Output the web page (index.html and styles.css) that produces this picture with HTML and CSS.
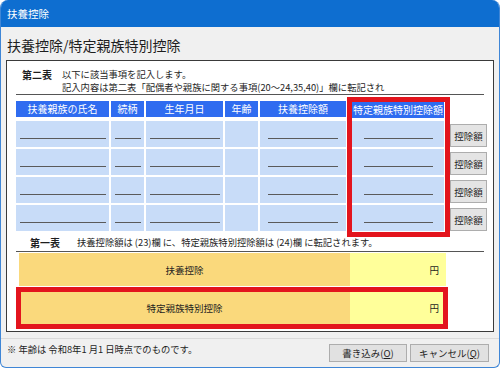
FILE: index.html
```html
<!DOCTYPE html>
<html>
<head>
    <title>扶養控除</title>
    <link rel="stylesheet" href="styles.css">
</head>
<body>
    <div class="window">
        <div class="titlebar">扶養控除</div>
        <h1 class="heading">扶養控除/特定親族特別控除</h1>

        <div class="panel">
            <div class="note">
                <div class="note-label">第二表</div>
                <div class="note-text">以下に該当事項を記入します。<br>記入内容は第二表「配偶者や親族に関する事項(20～24,35,40)」欄に転記され</div>
            </div>

            <div class="grid">
                <div class="head">扶養親族の氏名</div>
                <div class="head">続柄</div>
                <div class="head">生年月日</div>
                <div class="head">年齢</div>
                <div class="head">扶養控除額</div>
                <div class="head head-special">特定親族特別控除額</div>
                <div></div>

                <div class="cell"><span class="line w-name"></span></div>
                <div class="cell"><span class="line w-rel"></span></div>
                <div class="cell"><span class="line w-date"></span></div>
                <div class="cell"></div>
                <div class="cell"><span class="line w-amount"></span></div>
                <div class="cell cell-special"><span class="line w-special"></span></div>
                <button class="calc">控除額</button>

                <div class="cell"><span class="line w-name"></span></div>
                <div class="cell"><span class="line w-rel"></span></div>
                <div class="cell"><span class="line w-date"></span></div>
                <div class="cell"></div>
                <div class="cell"><span class="line w-amount"></span></div>
                <div class="cell cell-special"><span class="line w-special"></span></div>
                <button class="calc">控除額</button>

                <div class="cell"><span class="line w-name"></span></div>
                <div class="cell"><span class="line w-rel"></span></div>
                <div class="cell"><span class="line w-date"></span></div>
                <div class="cell"></div>
                <div class="cell"><span class="line w-amount"></span></div>
                <div class="cell cell-special"><span class="line w-special"></span></div>
                <button class="calc">控除額</button>

                <div class="cell"><span class="line w-name"></span></div>
                <div class="cell"><span class="line w-rel"></span></div>
                <div class="cell"><span class="line w-date"></span></div>
                <div class="cell"></div>
                <div class="cell"><span class="line w-amount"></span></div>
                <div class="cell cell-special"><span class="line w-special"></span></div>
                <button class="calc">控除額</button>
            </div>

            <div class="note note-one">
                <div class="note-label">第一表</div>
                <div class="note-text">扶養控除額は (23)欄 に、特定親族特別控除額は (24)欄 に転記されます。</div>
            </div>

            <div class="total">
                <div class="total-label">扶養控除</div>
                <div class="total-value">円</div>
            </div>
            <div class="total total-second">
                <div class="total-label">特定親族特別控除</div>
                <div class="total-value">円</div>
            </div>

            <!-- red highlight frames drawn over the content -->
            <div class="mark mark-col"></div>
            <div class="mark mark-total"></div>
        </div>

        <div class="footer">
            <div class="footer-note">※ 年齢は 令和8年1 月1 日時点でのものです。</div>
            <button class="btn">書き込み(<u>O</u>)</button>
            <button class="btn">キャンセル(<u>Q</u>)</button>
        </div>
    </div>
</body>
</html>
```

FILE: styles.css
```css
body {
    margin: 0;
    background: #fff;
    font-family: "Noto Sans CJK JP", "Noto Sans", sans-serif;
    color: #1e1e1e;
}
.window {
    width: 500px;
    height: 368px;
    box-sizing: border-box;
    border: 1px solid #3f86d6;
    border-top: none;
    border-radius: 8px 8px 6px 6px;
    overflow: hidden;
    background: #f0f0f0;
    display: flex;
    flex-direction: column;
}
.titlebar {
    height: 27px;
    line-height: 27px;
    background: #0e6ed0;
    color: #fff;
    font-size: 10.5px;
    padding-left: 7px;
    margin: 0 -1px;
}
.heading {
    margin: 0;
    padding: 9px 0 0 6px;
    font-size: 14px;
    font-weight: normal;
    line-height: 18px;
}
.panel {
    position: relative;
    margin: 6px 0 0 5px;
    width: 488px;
    height: 272px;
    box-sizing: border-box;
    border: 1px solid #3a3a3a;
    background: #fff;
    padding: 7px 6px 0 9px;
}
.note {
    display: grid;
    grid-template-columns: 46px 1fr;
    font-size: 9.3px;
    line-height: 13px;
    border-bottom: 1px solid #555;
    margin-right: 3px;
}
.note-label {
    padding-left: 6px;
    font-weight: bold;
    font-size: 10px;
}
.note-one {
    margin-top: 5px;
    padding-bottom: 2px;
    grid-template-columns: 61px 1fr;
}
.note-one .note-label {
    padding-left: 14px;
}
.grid {
    margin-top: 6px;
    display: grid;
    grid-template-columns: 93px 33px 77px 33px 86px 96px 41px;
    grid-template-rows: 18px repeat(4, 26px);
    gap: 2px;
}
.head {
    height: 16px;
    line-height: 16px;
    background: #2f6cf0;
    color: #fff;
    font-size: 10px;
    text-align: center;
    white-space: nowrap;
    overflow: hidden;
}
.head-special {
    margin-left: 4px;
    margin-top: 1px;
}
.cell {
    background: #c8dcf8;
    display: flex;
    justify-content: center;
    align-items: flex-end;
    padding-bottom: 8px;
    box-sizing: border-box;
}
.cell-special {
    margin-left: 4px;
}
.line {
    border-bottom: 1px solid #5a5a5a;
}
.w-name { width: 86px; }
.w-rel { width: 26px; }
.w-date { width: 70px; }
.w-amount { width: 70px; }
.w-special { width: 69px; }
.calc {
    margin: 3px 0 0 4px;
    height: 23px;
    padding: 0;
    font-family: inherit;
    font-size: 9.5px;
    color: #1e1e1e;
    background: #e4e4e4;
    border: 1px solid #adadad;
    border-radius: 0;
}
.total {
    display: grid;
    grid-template-columns: 331px 1fr;
    width: 427px;
    height: 33px;
    margin: 1px 0 0 3px;
    font-size: 9.5px;
}
.total-second {
    margin-top: 4px;
    height: 35px;
}
.total-label {
    background: #fad97c;
    display: flex;
    align-items: center;
    justify-content: center;
}
.total-value {
    background: #ffff9a;
    display: flex;
    align-items: center;
    justify-content: flex-end;
    padding-right: 7px;
}
.mark {
    position: absolute;
    box-sizing: border-box;
    border: 5px solid #e3141d;
}
.mark-col {
    left: 340px;
    top: 36px;
    width: 103px;
    height: 140px;
}
.mark-total {
    left: 9px;
    top: 226px;
    width: 432px;
    height: 42px;
}
.footer {
    flex: 1;
    margin-top: 6px;
    border-top: 1px solid #dadada;
    display: flex;
    align-items: flex-start;
    padding: 5px 10px 0 6px;
    gap: 3px;
}
.footer-note {
    flex: 1;
    font-size: 9.3px;
    line-height: 11px;
}
.btn {
    height: 18px;
    padding: 0;
    font-family: inherit;
    font-size: 9.5px;
    color: #1e1e1e;
    background: #e1e1e1;
    border: 1px solid #adadad;
    border-radius: 0;
    width: 78px;
}
.btn + .btn {
    width: 79px;
}
```
